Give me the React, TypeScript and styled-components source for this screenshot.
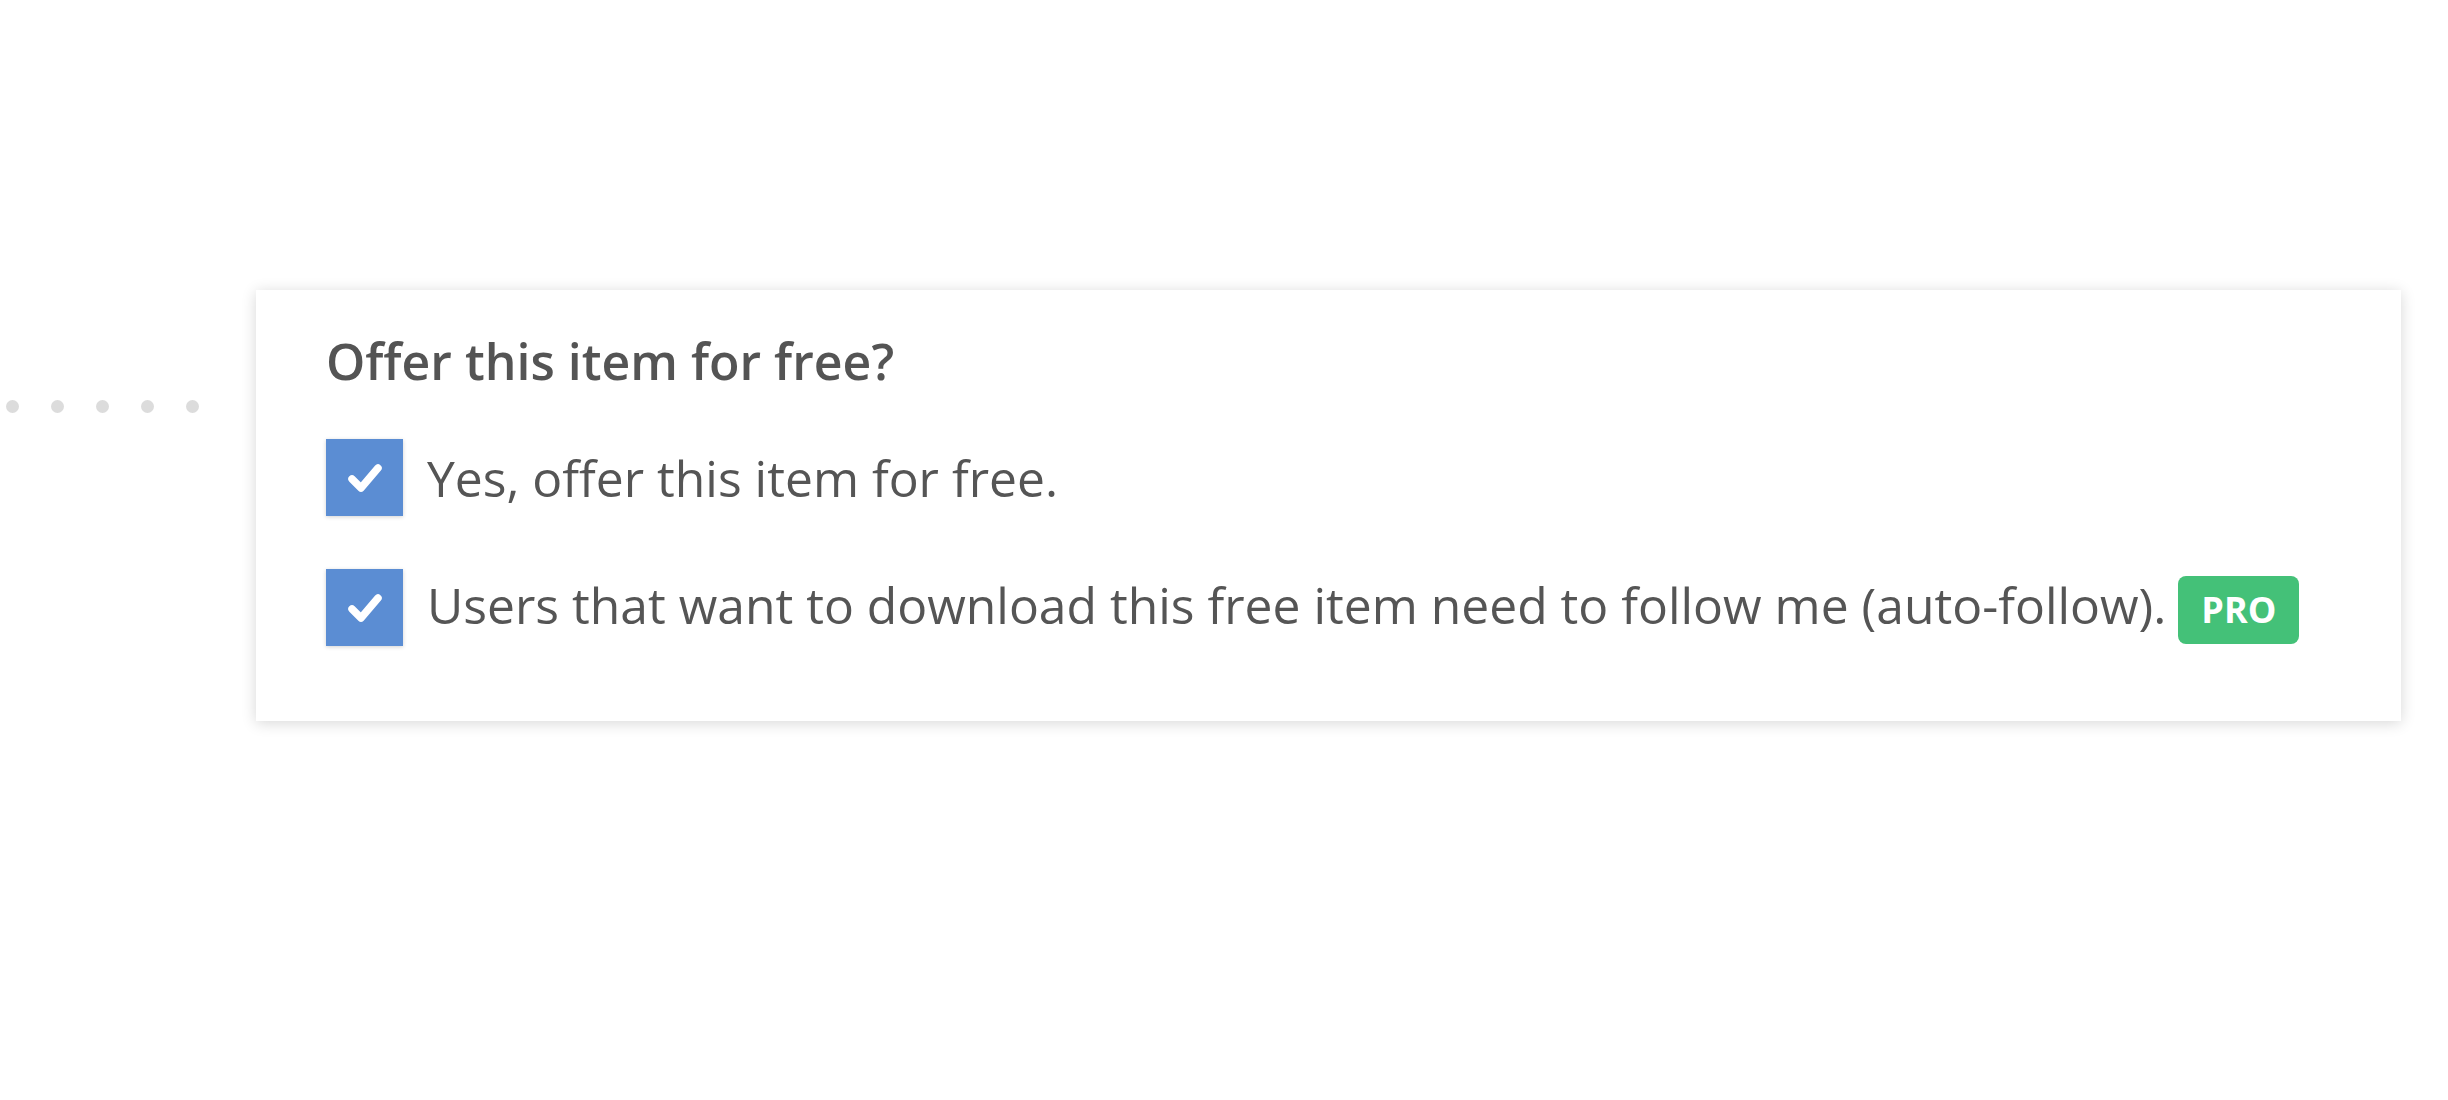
import React from 'react';
import styled, { createGlobalStyle } from 'styled-components';

const GlobalStyle = createGlobalStyle`
  body {
    margin: 0;
    background: #ffffff;
    font-family: 'Open Sans', 'Liberation Sans', sans-serif;
  }
`;

const Page = styled.div`
  display: flex;
  align-items: flex-start;
  padding: 290px 0 0 6px;
  height: 810px;
`;

const Dots = styled.div`
  display: flex;
  gap: 32px;
  margin-top: 110px;
  margin-right: 57px;
`;

const Dot = styled.span`
  width: 13px;
  height: 13px;
  border-radius: 50%;
  background: #dcdcdc;
`;

const Card = styled.section`
  width: 2145px;
  height: 431px;
  box-sizing: border-box;
  padding: 40px 70px 0;
  background: #ffffff;
  box-shadow: 0 2px 14px rgba(0, 0, 0, 0.16);
`;

const Title = styled.h2`
  margin: 0 0 47px;
  font-size: 50px;
  font-weight: 600;
  line-height: 62px;
  color: #545454;
`;

const Options = styled.div`
  display: flex;
  flex-direction: column;
  gap: 53px;
`;

const Row = styled.label`
  display: flex;
  align-items: center;
  gap: 24px;
`;

const Box = styled.span`
  width: 77px;
  height: 77px;
  flex: none;
  display: flex;
  align-items: center;
  justify-content: center;
  background: #5b8dd3;
  box-shadow: 0 1px 4px rgba(0, 0, 0, 0.18);
`;

const Text = styled.span`
  font-size: 49.8px;
  color: #555555;
  line-height: 68px;
`;

const Pro = styled.span`
  display: inline-flex;
  align-items: center;
  justify-content: center;
  margin-left: 12px;
  width: 121px;
  height: 68px;
  border-radius: 8px;
  background: #44c178;
  color: #ffffff;
  font-size: 36px;
  font-weight: 700;
  line-height: 1;
  vertical-align: middle;
`;

const Check = () => (
  <svg width="38" height="32" viewBox="0 0 38 32">
    <path
      d="M6 17 L15 26 L32 6"
      fill="none"
      stroke="#fff"
      strokeWidth="7.5"
      strokeLinecap="round"
      strokeLinejoin="round"
    />
  </svg>
);

const options = [
  { text: 'Yes, offer this item for free.', pro: false },
  {
    text: 'Users that want to download this free item need to follow me (auto-follow).',
    pro: true,
  },
];

export default function App() {
  return (
    <>
      <GlobalStyle />
      <Page>
        <Dots>
          {[0, 1, 2, 3, 4].map((i) => (
            <Dot key={i} />
          ))}
        </Dots>
        <Card>
          <Title>Offer this item for free?</Title>
          <Options>
            {options.map((o) => (
              <Row key={o.text}>
                <Box>
                  <Check />
                </Box>
                <Text>
                  {o.text}
                  {o.pro && <Pro>PRO</Pro>}
                </Text>
              </Row>
            ))}
          </Options>
        </Card>
      </Page>
    </>
  );
}
